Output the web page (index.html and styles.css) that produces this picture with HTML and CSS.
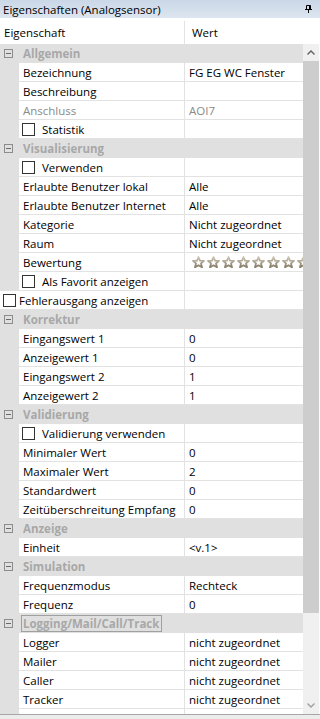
FILE: index.html
```html
<!DOCTYPE html>
<html lang="de">
<head>
<meta charset="utf-8">
<title>Eigenschaften</title>
<link rel="stylesheet" href="styles.css">
</head>
<body>
<div class="panel">
  <div class="titlebar">
    <span>Eigenschaften (Analogsensor)</span>
    <svg class="pin" width="7" height="8" viewBox="0 0 7 8"><path d="M1.5 0.5h4v4h-4z" fill="none" stroke="#000"/><path d="M4 1v3h1V1z" fill="#000"/><path d="M0 4.5h7" stroke="#000"/><path d="M3.5 5v3" stroke="#000"/></svg>
  </div>
  <div class="header">
    <div class="hname">Eigenschaft</div>
    <div class="hval">Wert</div>
  </div>
  <div class="main">
    <div class="grid">
      <div class="cat"><span class="minus"></span><span class="ct">Allgemein</span></div>
      <div class="row"><div class="gut"></div><div class="name">Bezeichnung</div><div class="val">FG EG WC Fenster</div></div>
      <div class="row"><div class="gut"></div><div class="name">Beschreibung</div><div class="val"></div></div>
      <div class="row"><div class="gut"></div><div class="name dim">Anschluss</div><div class="val dim">AOI7</div></div>
      <div class="row"><div class="gut"></div><div class="name chk"><span class="cb"></span>Statistik</div><div class="val"></div></div>
      <div class="cat"><span class="minus"></span><span class="ct">Visualisierung</span></div>
      <div class="row"><div class="gut"></div><div class="name chk"><span class="cb"></span>Verwenden</div><div class="val"></div></div>
      <div class="row"><div class="gut"></div><div class="name">Erlaubte Benutzer lokal</div><div class="val">Alle</div></div>
      <div class="row"><div class="gut"></div><div class="name">Erlaubte Benutzer Internet</div><div class="val">Alle</div></div>
      <div class="row"><div class="gut"></div><div class="name">Kategorie</div><div class="val">Nicht zugeordnet</div></div>
      <div class="row"><div class="gut"></div><div class="name">Raum</div><div class="val">Nicht zugeordnet</div></div>
      <div class="row"><div class="gut"></div><div class="name">Bewertung</div><div class="val stars">
        <svg width="120" height="12" viewBox="0 0 120 12">
          <defs>
            <linearGradient id="sg" x1="0" y1="0" x2="0" y2="1">
              <stop offset="0" stop-color="#cfc8b8"/>
              <stop offset="1" stop-color="#857b66"/>
            </linearGradient>
            <symbol id="st" viewBox="0 0 13 12" width="13" height="12">
              <polygon points="6.5,1 8,4.6 12,4.8 9,7.4 10,11.2 6.5,9.2 3,11.2 4,7.4 1,4.8 5,4.6" fill="#fff" stroke="url(#sg)" stroke-width="1.8" stroke-linejoin="round"/>
            </symbol>
          </defs>
          <use href="#st" x="0"/><use href="#st" x="15"/><use href="#st" x="30"/><use href="#st" x="45"/><use href="#st" x="60"/><use href="#st" x="75"/><use href="#st" x="90"/><use href="#st" x="105"/>
        </svg>
      </div></div>
      <div class="row"><div class="gut"></div><div class="name chk"><span class="cb"></span>Als Favorit anzeigen</div><div class="val"></div></div>
      <div class="row full"><div class="name chk"><span class="cb"></span>Fehlerausgang anzeigen</div><div class="val"></div></div>
      <div class="cat"><span class="minus"></span><span class="ct">Korrektur</span></div>
      <div class="row"><div class="gut"></div><div class="name">Eingangswert 1</div><div class="val">0</div></div>
      <div class="row"><div class="gut"></div><div class="name">Anzeigewert 1</div><div class="val">0</div></div>
      <div class="row"><div class="gut"></div><div class="name">Eingangswert 2</div><div class="val">1</div></div>
      <div class="row"><div class="gut"></div><div class="name">Anzeigewert 2</div><div class="val">1</div></div>
      <div class="cat"><span class="minus"></span><span class="ct">Validierung</span></div>
      <div class="row"><div class="gut"></div><div class="name chk"><span class="cb"></span>Validierung verwenden</div><div class="val"></div></div>
      <div class="row"><div class="gut"></div><div class="name">Minimaler Wert</div><div class="val">0</div></div>
      <div class="row"><div class="gut"></div><div class="name">Maximaler Wert</div><div class="val">2</div></div>
      <div class="row"><div class="gut"></div><div class="name">Standardwert</div><div class="val">0</div></div>
      <div class="row"><div class="gut"></div><div class="name">Zeitüberschreitung Empfang</div><div class="val">0</div></div>
      <div class="cat"><span class="minus"></span><span class="ct">Anzeige</span></div>
      <div class="row"><div class="gut"></div><div class="name">Einheit</div><div class="val">&lt;v.1&gt;</div></div>
      <div class="cat"><span class="minus"></span><span class="ct">Simulation</span></div>
      <div class="row"><div class="gut"></div><div class="name">Frequenzmodus</div><div class="val">Rechteck</div></div>
      <div class="row"><div class="gut"></div><div class="name">Frequenz</div><div class="val">0</div></div>
      <div class="cat"><span class="minus"></span><span class="ct focus">Logging/Mail/Call/Track</span></div>
      <div class="row"><div class="gut"></div><div class="name">Logger</div><div class="val">nicht zugeordnet</div></div>
      <div class="row"><div class="gut"></div><div class="name">Mailer</div><div class="val">nicht zugeordnet</div></div>
      <div class="row"><div class="gut"></div><div class="name">Caller</div><div class="val">nicht zugeordnet</div></div>
      <div class="row"><div class="gut"></div><div class="name">Tracker</div><div class="val">nicht zugeordnet</div></div>
      <div class="row"><div class="gut"></div><div class="name">Meldung bei PIN-Vorgabe</div><div class="val">nicht zugeordnet</div></div>
    </div>
    <div class="vscroll">
      <div class="sbtn"><svg width="8" height="5" viewBox="0 0 8 5"><path d="M0.5 4.5L4 1l3.5 3.5" fill="none" stroke="#606060" stroke-width="1.4"/></svg></div>
      <div class="thumb"></div>
      <div class="track"></div>
      <div class="sbtn"><svg width="8" height="5" viewBox="0 0 8 5"><path d="M0.5 0.5L4 4l3.5-3.5" fill="none" stroke="#a0a0a0" stroke-width="1.4"/></svg></div>
    </div>
  </div>
  <div class="footer"></div>
</div>
</body>
</html>
```
FILE: styles.css
```css
* { box-sizing: border-box; }
html, body { margin: 0; background: #fff; }
body {
  font-family: "Open Sans", "Noto Sans", sans-serif;
  font-size: 11.5px;
  color: #000;
}
.panel {
  width: 320px;
  height: 719px;
  display: flex;
  flex-direction: column;
  overflow: hidden;
  background: #fff;
}
.titlebar {
  height: 18px;
  flex: none;
  display: flex;
  align-items: center;
  justify-content: space-between;
  padding: 0 8px 0 3px;
  background: linear-gradient(#cad7e7, #dde6f0);
}
.pin { display: block; }
.header {
  height: 26px;
  flex: none;
  display: grid;
  grid-template-columns: 184px 1fr;
}
.hname {
  padding: 3px 0 0 4px;
  display: flex;
  align-items: center;
}
.hval {
  margin-top: 3px;
  border-left: 1px solid #e3e3e3;
  padding-left: 7px;
  display: flex;
  align-items: center;
}
.main {
  flex: 1;
  min-height: 0;
  display: flex;
}
.grid {
  width: 303px;
  flex: none;
  overflow: hidden;
}
.vscroll {
  width: 16px;
  flex: none;
  margin-right: 1px;
  display: flex;
  flex-direction: column;
  background: #f0f0f0;
}
.sbtn {
  height: 17px;
  flex: none;
  display: flex;
  align-items: center;
  justify-content: center;
}
.thumb { height: 552px; flex: none; background: #cdcdcd; }
.track { flex: 1; }
.footer {
  height: 5px;
  flex: none;
  border-top: 1px solid #a6a6a6;
  background: #ececec;
}
.row {
  height: 19px;
  display: grid;
  grid-template-columns: 19px 166px 118px;
}
.row.full { grid-template-columns: 185px 118px; }
.gut { background: #e0e0e0; }
.name, .val {
  border-bottom: 1px solid #e2e2e2;
  display: flex;
  align-items: center;
  white-space: nowrap;
  overflow: hidden;
}
.name { border-right: 1px solid #e2e2e2; padding-left: 4px; }
.val { padding-left: 4px; }
.name.chk { padding-left: 3px; }
.cb {
  width: 13px;
  height: 13px;
  flex: none;
  border: 1px solid #333;
  background: #fff;
  margin-right: 7px;
}
.full .cb { width: 13px; height: 13px; margin-right: 3px; }
.dim { color: #8a8a8a; }
.stars { padding-left: 7px; }
.stars svg { display: block; flex: none; }
.cat {
  height: 19px;
  background: #e0e0e0;
  display: flex;
  align-items: center;
}
.minus {
  width: 9px;
  height: 9px;
  flex: none;
  margin-left: 4px;
  border: 1px solid #8c8c8c;
  display: flex;
  align-items: center;
  justify-content: center;
}
.minus::after {
  content: "";
  width: 5px;
  height: 1px;
  background: #6a6a6a;
}
.ct {
  margin-left: 10px;
  font-weight: bold;
  color: #a8a8a8;
}
.ct.focus {
  margin-left: 8px;
  height: 17px;
  padding: 0 2px 0 1px;
  border: 1px solid #a0a0a0;
  display: flex;
  align-items: center;
}
```
